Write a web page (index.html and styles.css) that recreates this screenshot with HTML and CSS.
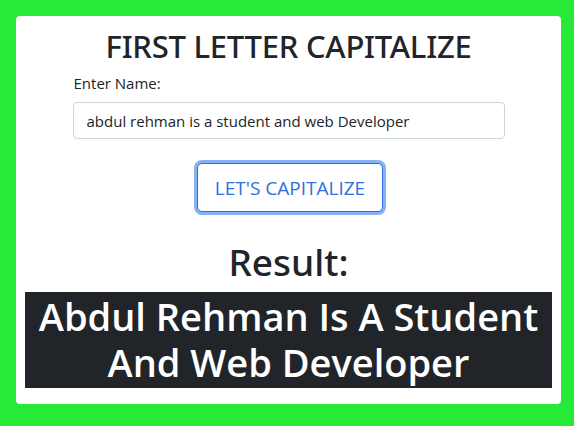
FILE: index.html
```html
<!DOCTYPE html>
<html lang="en">
<head>
<meta charset="utf-8">
<title>First Letter Capitalize</title>
<link rel="stylesheet" href="styles.css">
</head>
<body>
  <main class="card">
    <h1 class="title">FIRST LETTER CAPITALIZE</h1>
    <form class="form">
      <label class="label" for="name">Enter Name:</label>
      <input class="input" id="name" type="text" value="abdul rehman is a student and web Developer">
      <div class="actions">
        <button class="btn" type="button">LET'S CAPITALIZE</button>
      </div>
    </form>
    <h2 class="result-title">Result:</h2>
    <div class="result">Abdul Rehman Is A Student And Web Developer</div>
  </main>
</body>
</html>
```
FILE: styles.css
```css
* { box-sizing: border-box; }
html, body { margin: 0; height: 100%; }
body {
  background: #27ea38;
  padding: 16px 13px 0 16px;
  font-family: "Open Sans", "Noto Sans", sans-serif;
  color: #212529;
}
.card {
  background: #fff;
  border-radius: 4px;
  width: 545px;
  height: 388px;
  padding: 10px 9px 0 9px;
  display: flex;
  flex-direction: column;
  align-items: center;
}
.title {
  margin: 0;
  font-family: "Noto Sans", "Open Sans", sans-serif;
  font-size: 31px;
  font-weight: 500;
  line-height: 40px;
  letter-spacing: -0.25px;
}
.form {
  width: 432px;
  display: flex;
  flex-direction: column;
  margin-top: 7px;
}
.label {
  font-size: 15px;
  line-height: 20px;
  margin-left: 1px;
}
.input {
  margin-top: 9px;
  height: 37px;
  border: 1px solid #ced4da;
  border-radius: 4px;
  padding: 0 13px;
  font-family: inherit;
  font-size: 15px;
  color: #212529;
}
.actions {
  display: flex;
  justify-content: center;
  margin-top: 24px;
}
.btn {
  width: 186px;
  height: 49px;
  margin-left: 3px;
  border: 1px solid #2f6ee0;
  border-radius: 5px;
  background: #fff;
  color: #2f6ee0;
  font-family: inherit;
  font-size: 19px;
  box-shadow: 0 0 0 3px #86b1f5;
  padding: 0;
}
.result-title {
  margin: 28px 0 0 0;
  font-family: "Noto Sans", "Open Sans", sans-serif;
  font-size: 37px;
  font-weight: 500;
  line-height: 44px;
}
.result {
  margin-top: 8px;
  align-self: stretch;
  background: #212529;
  color: #fff;
  text-align: center;
  font-size: 38px;
  font-weight: 600;
  line-height: 46px;
  padding: 1px 6px 3px;
}
```
